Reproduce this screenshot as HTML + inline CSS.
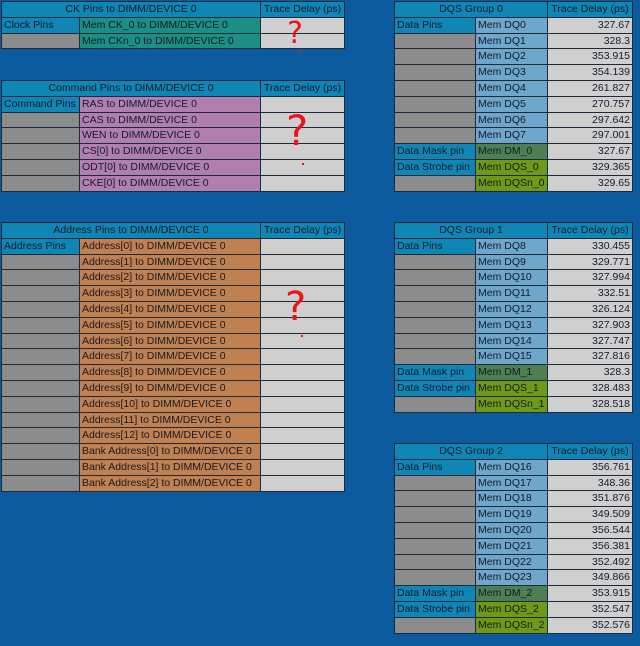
<!DOCTYPE html>
<html><head><meta charset="utf-8"><style>
body{margin:0;width:640px;height:646px;background:#0b5b9e;position:relative;overflow:hidden;font-family:"Liberation Sans",sans-serif;font-size:10.5px;color:#151a28}
table{position:absolute;border-collapse:collapse;table-layout:fixed}
td{height:14.8px;padding:0 2px;border:1px solid #1d2a3a;white-space:nowrap;overflow:hidden;line-height:14.8px;vertical-align:middle}
.h{background:#0f86b6;text-align:center}
.b{background:#0f86b6}
.g{background:#8c8c8c}
.l{background:#cfcfcf;text-align:right}
.ck{background:#1b8f82}
.p{background:#b07fb0}
.o{background:#c08050}
.q{background:#6fa6cb}
.dm{background:#4d7f52}
.ds{background:#6f9a18}
.qm{position:absolute;color:#e8151b;font-family:"DejaVu Sans",sans-serif;font-weight:normal;-webkit-text-stroke:0}
.dot{position:absolute;width:2px;height:2px;background:#e8151b}
</style></head><body>

<table style="left:1px;top:1px;width:343px">
<col style="width:78px"><col style="width:181px"><col style="width:84px">
<tr><td class="h" colspan="2">CK Pins to DIMM/DEVICE 0</td><td class="h">Trace Delay (ps)</td></tr>
<tr><td class="b">Clock Pins</td><td class="ck">Mem CK_0 to DIMM/DEVICE 0</td><td class="l"></td></tr>
<tr><td class="g"></td><td class="ck">Mem CKn_0 to DIMM/DEVICE 0</td><td class="l"></td></tr>
</table>

<table style="left:1px;top:80px;width:343px">
<col style="width:78px"><col style="width:181px"><col style="width:84px">
<tr><td class="h" colspan="2">Command Pins to DIMM/DEVICE 0</td><td class="h">Trace Delay (ps)</td></tr>
<tr><td class="b">Command Pins</td><td class="p">RAS to DIMM/DEVICE 0</td><td class="l"></td></tr>
<tr><td class="g"></td><td class="p">CAS to DIMM/DEVICE 0</td><td class="l"></td></tr>
<tr><td class="g"></td><td class="p">WEN to DIMM/DEVICE 0</td><td class="l"></td></tr>
<tr><td class="g"></td><td class="p">CS[0] to DIMM/DEVICE 0</td><td class="l"></td></tr>
<tr><td class="g"></td><td class="p">ODT[0] to DIMM/DEVICE 0</td><td class="l"></td></tr>
<tr><td class="g"></td><td class="p">CKE[0] to DIMM/DEVICE 0</td><td class="l"></td></tr>
</table>

<table style="left:1px;top:222px;width:343px">
<col style="width:78px"><col style="width:181px"><col style="width:84px">
<tr><td class="h" colspan="2">Address Pins to DIMM/DEVICE 0</td><td class="h">Trace Delay (ps)</td></tr>
<tr><td class="b">Address Pins</td><td class="o">Address[0] to DIMM/DEVICE 0</td><td class="l"></td></tr>
<tr><td class="g"></td><td class="o">Address[1] to DIMM/DEVICE 0</td><td class="l"></td></tr>
<tr><td class="g"></td><td class="o">Address[2] to DIMM/DEVICE 0</td><td class="l"></td></tr>
<tr><td class="g"></td><td class="o">Address[3] to DIMM/DEVICE 0</td><td class="l"></td></tr>
<tr><td class="g"></td><td class="o">Address[4] to DIMM/DEVICE 0</td><td class="l"></td></tr>
<tr><td class="g"></td><td class="o">Address[5] to DIMM/DEVICE 0</td><td class="l"></td></tr>
<tr><td class="g"></td><td class="o">Address[6] to DIMM/DEVICE 0</td><td class="l"></td></tr>
<tr><td class="g"></td><td class="o">Address[7] to DIMM/DEVICE 0</td><td class="l"></td></tr>
<tr><td class="g"></td><td class="o">Address[8] to DIMM/DEVICE 0</td><td class="l"></td></tr>
<tr><td class="g"></td><td class="o">Address[9] to DIMM/DEVICE 0</td><td class="l"></td></tr>
<tr><td class="g"></td><td class="o">Address[10] to DIMM/DEVICE 0</td><td class="l"></td></tr>
<tr><td class="g"></td><td class="o">Address[11] to DIMM/DEVICE 0</td><td class="l"></td></tr>
<tr><td class="g"></td><td class="o">Address[12] to DIMM/DEVICE 0</td><td class="l"></td></tr>
<tr><td class="g"></td><td class="o">Bank Address[0] to DIMM/DEVICE 0</td><td class="l"></td></tr>
<tr><td class="g"></td><td class="o">Bank Address[1] to DIMM/DEVICE 0</td><td class="l"></td></tr>
<tr><td class="g"></td><td class="o">Bank Address[2] to DIMM/DEVICE 0</td><td class="l"></td></tr>
</table>

<table style="left:394px;top:1px;width:238px">
<col style="width:81px"><col style="width:72px"><col style="width:85px">
<tr><td class="h" colspan="2">DQS Group 0</td><td class="h">Trace Delay (ps)</td></tr>
<tr><td class="b">Data Pins</td><td class="q">Mem DQ0</td><td class="l">327.67</td></tr>
<tr><td class="g"></td><td class="q">Mem DQ1</td><td class="l">328.3</td></tr>
<tr><td class="g"></td><td class="q">Mem DQ2</td><td class="l">353.915</td></tr>
<tr><td class="g"></td><td class="q">Mem DQ3</td><td class="l">354.139</td></tr>
<tr><td class="g"></td><td class="q">Mem DQ4</td><td class="l">261.827</td></tr>
<tr><td class="g"></td><td class="q">Mem DQ5</td><td class="l">270.757</td></tr>
<tr><td class="g"></td><td class="q">Mem DQ6</td><td class="l">297.642</td></tr>
<tr><td class="g"></td><td class="q">Mem DQ7</td><td class="l">297.001</td></tr>
<tr><td class="b">Data Mask pin</td><td class="dm">Mem DM_0</td><td class="l">327.67</td></tr>
<tr><td class="b">Data Strobe pin</td><td class="ds">Mem DQS_0</td><td class="l">329.365</td></tr>
<tr><td class="g"></td><td class="ds">Mem DQSn_0</td><td class="l">329.65</td></tr>
</table>

<table style="left:394px;top:222px;width:238px">
<col style="width:81px"><col style="width:72px"><col style="width:85px">
<tr><td class="h" colspan="2">DQS Group 1</td><td class="h">Trace Delay (ps)</td></tr>
<tr><td class="b">Data Pins</td><td class="q">Mem DQ8</td><td class="l">330.455</td></tr>
<tr><td class="g"></td><td class="q">Mem DQ9</td><td class="l">329.771</td></tr>
<tr><td class="g"></td><td class="q">Mem DQ10</td><td class="l">327.994</td></tr>
<tr><td class="g"></td><td class="q">Mem DQ11</td><td class="l">332.51</td></tr>
<tr><td class="g"></td><td class="q">Mem DQ12</td><td class="l">326.124</td></tr>
<tr><td class="g"></td><td class="q">Mem DQ13</td><td class="l">327.903</td></tr>
<tr><td class="g"></td><td class="q">Mem DQ14</td><td class="l">327.747</td></tr>
<tr><td class="g"></td><td class="q">Mem DQ15</td><td class="l">327.816</td></tr>
<tr><td class="b">Data Mask pin</td><td class="dm">Mem DM_1</td><td class="l">328.3</td></tr>
<tr><td class="b">Data Strobe pin</td><td class="ds">Mem DQS_1</td><td class="l">328.483</td></tr>
<tr><td class="g"></td><td class="ds">Mem DQSn_1</td><td class="l">328.518</td></tr>
</table>

<table style="left:394px;top:443px;width:238px">
<col style="width:81px"><col style="width:72px"><col style="width:85px">
<tr><td class="h" colspan="2">DQS Group 2</td><td class="h">Trace Delay (ps)</td></tr>
<tr><td class="b">Data Pins</td><td class="q">Mem DQ16</td><td class="l">356.761</td></tr>
<tr><td class="g"></td><td class="q">Mem DQ17</td><td class="l">348.36</td></tr>
<tr><td class="g"></td><td class="q">Mem DQ18</td><td class="l">351.876</td></tr>
<tr><td class="g"></td><td class="q">Mem DQ19</td><td class="l">349.509</td></tr>
<tr><td class="g"></td><td class="q">Mem DQ20</td><td class="l">356.544</td></tr>
<tr><td class="g"></td><td class="q">Mem DQ21</td><td class="l">356.381</td></tr>
<tr><td class="g"></td><td class="q">Mem DQ22</td><td class="l">352.492</td></tr>
<tr><td class="g"></td><td class="q">Mem DQ23</td><td class="l">349.866</td></tr>
<tr><td class="b">Data Mask pin</td><td class="dm">Mem DM_2</td><td class="l">353.915</td></tr>
<tr><td class="b">Data Strobe pin</td><td class="ds">Mem DQS_2</td><td class="l">352.547</td></tr>
<tr><td class="g"></td><td class="ds">Mem DQSn_2</td><td class="l">352.576</td></tr>
</table>

<div class="qm" style="left:287px;top:16px;font-size:30px">?</div>
<div class="dot" style="left:300px;top:51px"></div>
<div class="qm" style="left:286px;top:106px;font-size:42px">?</div>
<div class="dot" style="left:302px;top:163px"></div>
<div class="qm" style="left:285px;top:284px;font-size:40px">?</div>
<div class="dot" style="left:301px;top:335px"></div>
</body></html>
